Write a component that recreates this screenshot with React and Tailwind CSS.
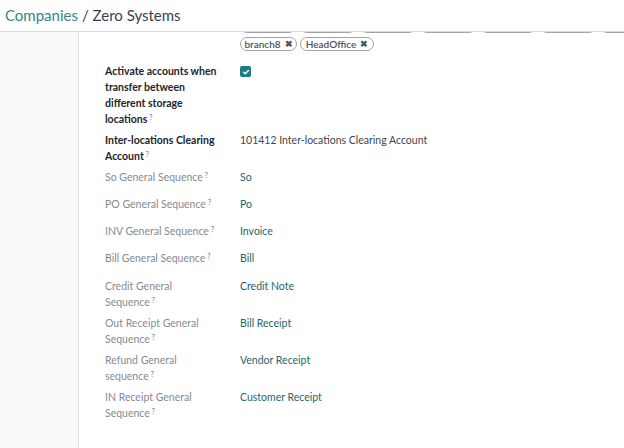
import React from 'react';

const topTags = ['', '', '', '', '', '', ''];

const rows = [
  { label: 'So General Sequence', value: 'So' },
  { label: 'PO General Sequence', value: 'Po' },
  { label: 'INV General Sequence', value: 'Invoice' },
  { label: 'Bill General Sequence', value: 'Bill' },
  { label: 'Credit General Sequence', value: 'Credit Note' },
  { label: 'Out Receipt General Sequence', value: 'Bill Receipt' },
  { label: 'Refund General sequence', value: 'Vendor Receipt' },
  { label: 'IN Receipt General Sequence', value: 'Customer Receipt' },
];

const Help = () => (
  <sup className="ml-[2px] text-[7px] leading-none text-[#6b7280] font-normal">?</sup>
);

const Tag = ({ children, w }) => (
  <span
    className={`inline-flex items-center justify-center gap-[4px] h-[14px] rounded-full border border-[#a3a3a3] text-[10px] font-semibold text-[#4b5563] ${w}`}
  >
    {children}
  </span>
);

export default function App() {
  return (
    <div
      className="w-[624px] h-[448px] overflow-hidden bg-white flex flex-col"
      style={{ fontFamily: 'Lato, "Open Sans", sans-serif' }}
    >
      {/* HEADER */}
      <div className="h-[32px] shrink-0 border-b border-[#d8dadd] flex items-start pl-[5px] pt-[3px]">
        <span className="text-[15px] leading-[24px] text-[#37838a]">Companies</span>
        <span className="text-[15px] leading-[24px] text-[#374151] ml-[4px]">/ Zero Systems</span>
      </div>

      <div className="flex flex-1 min-h-0">
        <div className="w-[79px] shrink-0 bg-[#f8f9fa] border-r border-[#e0e2e5]" />

        <div className="flex-1 overflow-hidden pl-[26px]">
          {/* TAGS */}
          <div className="ml-[135px] mt-[-13px] flex flex-col gap-[4px]">
            <div className="flex gap-[4px]">
              {topTags.map((t, i) => (
                <Tag key={i} w="w-[56px] shrink-0">{t}</Tag>
              ))}
            </div>
            <div className="flex gap-[3px]">
              <Tag w="w-[57px]">
                branch8 <span className="text-[9px] font-black">✖</span>
              </Tag>
              <Tag w="w-[74px]">
                HeadOffice <span className="text-[9px] font-black">✖</span>
              </Tag>
            </div>
          </div>

          {/* FORM */}
          <div className="mt-[12px] text-[10.5px] leading-4">
            <div className="grid grid-cols-[135px_1fr] mb-[5px]">
              <div className="font-bold text-[#212529] pr-[18px]">
                Activate accounts when transfer between different storage locations
                <Help />
              </div>
              <div className="pt-[3px]">
                <span className="w-[11px] h-[11px] rounded-[2px] bg-[#1b7c82] flex items-center justify-center">
                  <svg width="8" height="8" viewBox="0 0 10 10" fill="none">
                    <path d="M2 5.2L4.1 7.2L8 3" stroke="white" strokeWidth="1.8" strokeLinecap="round" strokeLinejoin="round" />
                  </svg>
                </span>
              </div>
            </div>

            <div className="grid grid-cols-[135px_1fr] mb-[5px]">
              <div className="font-bold text-[#212529] pr-[10px]">
                Inter-locations Clearing Account
                <Help />
              </div>
              <div className="text-[#3f4650]">101412 Inter-locations Clearing Account</div>
            </div>

            {rows.map((r, i) => (
              <div
                key={r.label}
                className={`grid grid-cols-[135px_1fr] min-h-[22px] ${i === 3 ? 'mb-[6px]' : 'mb-[5px]'}`}
              >
                <div className="text-[#868b91] pr-[18px]">
                  {r.label}
                  <Help />
                </div>
                <div className="text-[#276569]">{r.value}</div>
              </div>
            ))}
          </div>
        </div>
      </div>
    </div>
  );
}
